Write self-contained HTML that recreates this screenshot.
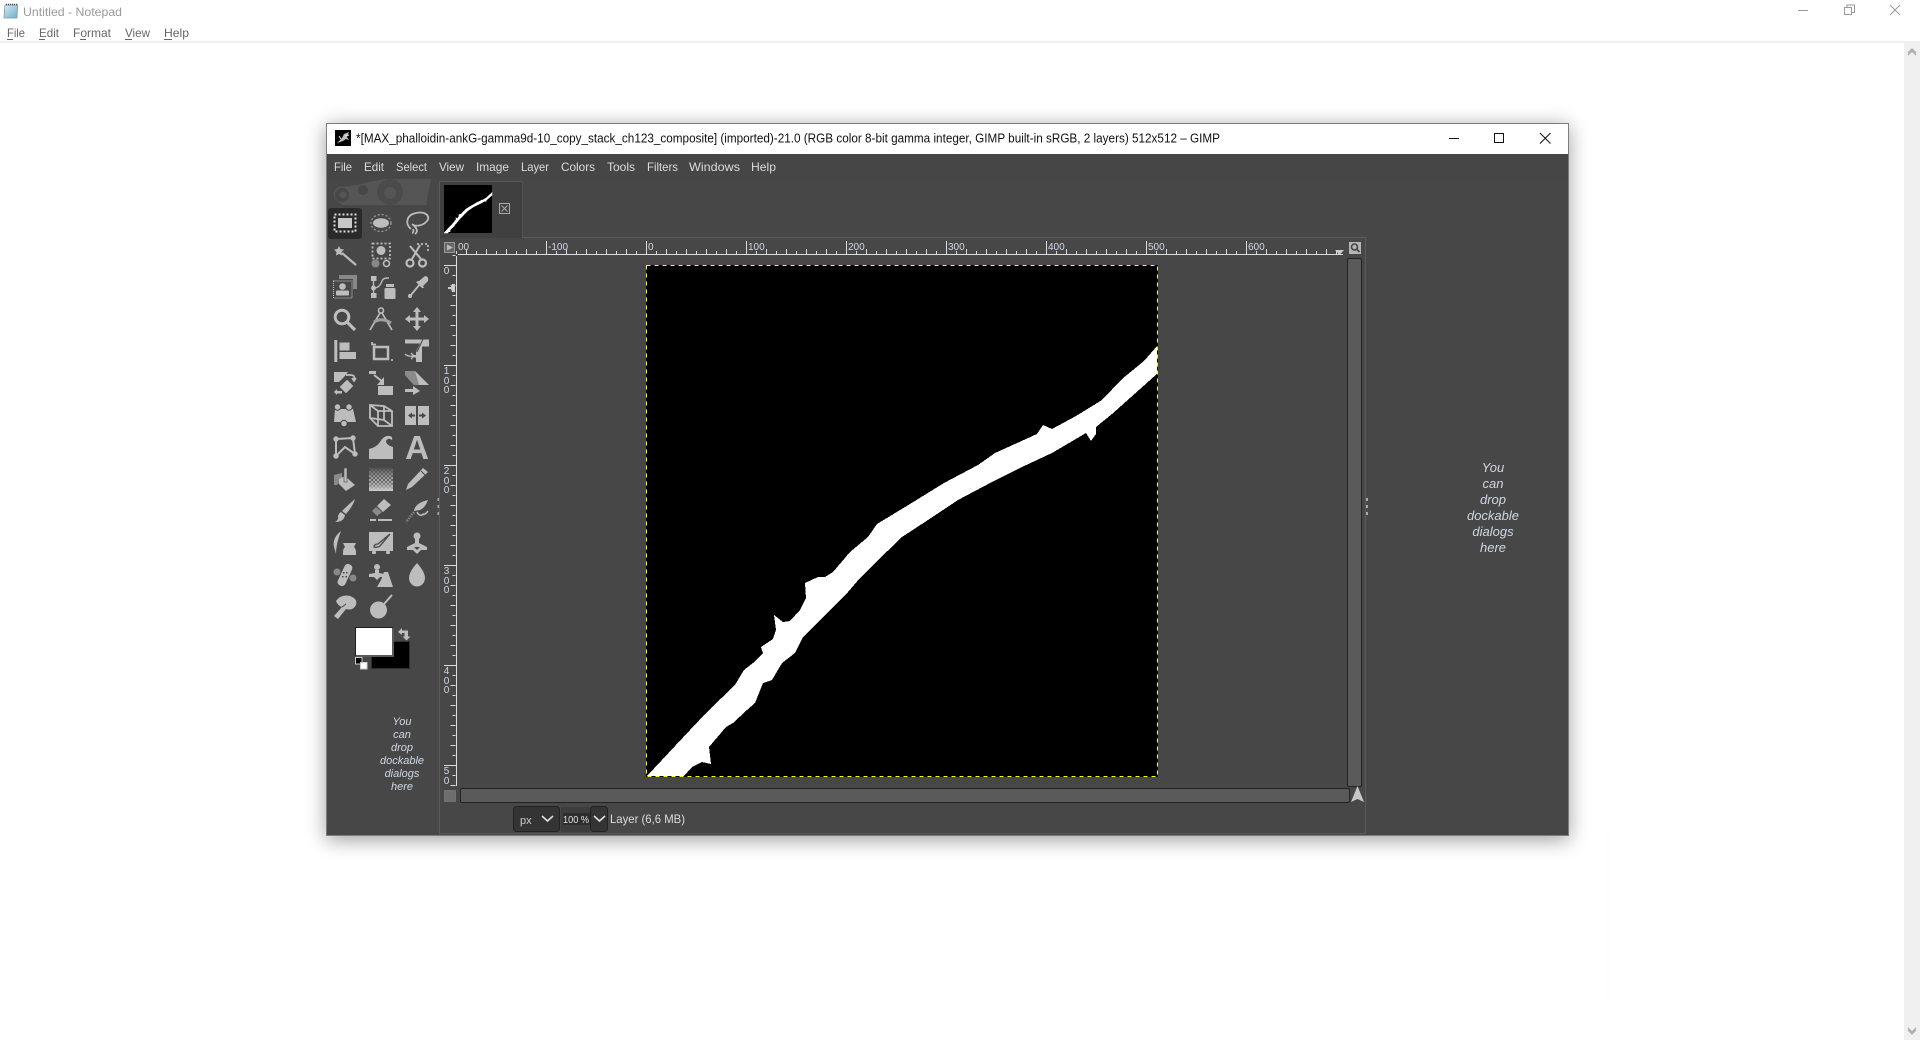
<!DOCTYPE html>
<html><head><meta charset="utf-8"><title>GIMP in Notepad</title>
<style>
html,body{margin:0;padding:0;background:#fff;overflow:hidden}
svg{display:block;font-family:"Liberation Sans",sans-serif}
.n{font-size:12px;fill:#666}
.m{font-size:12px;fill:#dcdcdc}
.r{font-size:10px;fill:#cfd8e6}
.d{font-style:italic;text-anchor:middle;fill:#ced8e4}
.i{fill:#bdbdbd}
.s{fill:none;stroke:#bdbdbd}
</style></head><body>
<svg width="1920" height="1040" viewBox="0 0 1920 1040" xmlns="http://www.w3.org/2000/svg">
<defs>
<filter id="sh" x="-5%" y="-5%" width="110%" height="112%"><feGaussianBlur stdDeviation="10"/></filter>
<pattern id="chk" width="4" height="4" patternUnits="userSpaceOnUse"><rect width="4" height="4" fill="#474747"/><rect width="2" height="2" fill="#bdbdbd"/><rect x="2" y="2" width="2" height="2" fill="#bdbdbd"/></pattern>
<linearGradient id="gf" x1="0" y1="0" x2="0" y2="1"><stop offset="0" stop-color="#474747"/><stop offset=".55" stop-color="#8a8a8a" stop-opacity=".35"/><stop offset="1" stop-color="#d0d0d0"/></linearGradient>
<linearGradient id="np" x1="0" y1="0" x2="1" y2="1"><stop offset="0" stop-color="#d5e8f2"/><stop offset="1" stop-color="#6fb0cc"/></linearGradient>
<polygon id="den" points="647,776 690,730 708,711 735,685 744,670 753,663 763,653 761,647 773,639 776,630 774,615 783,622 790,621 800,610 806,598 805,583 818,577 825,577 833,572 850,552 868,537 877,524 910,504 944,483 978,465 995,453 1037,434 1043,425 1052,429 1076,416 1102,400 1122,379 1144,361 1158,345 1158,373 1112,414 1096,427 1096,434 1091,441 1086,433 1052,453 1022,467 992,482 958,500 928,520 902,537 873,565 860,578 848,592 803,637 795,653 782,663 772,680 763,683 755,703 747,710 733,723 726,727 709,747 711,764 702,762 692,767 683,777 647,777"/>
</defs>

<!-- Notepad -->
<rect width="1920" height="1040" fill="#fff"/>
<g>
<rect x="4" y="5" width="13" height="13" fill="url(#np)" stroke="#7a95a3" stroke-width=".7" transform="skewX(-4) translate(1.2 0)"/>
<line x1="6" y1="4.5" x2="18" y2="4.5" stroke="#444" stroke-width="1.6" stroke-dasharray="1 1"/>
</g>
<text class="n" x="23" y="16" textLength="99" lengthAdjust="spacingAndGlyphs" style="fill:#9a9a9a">Untitled - Notepad</text>
<text class="n" x="7" y="37" textLength="18" lengthAdjust="spacingAndGlyphs">File</text>
<text class="n" x="39" y="37" textLength="20" lengthAdjust="spacingAndGlyphs">Edit</text>
<text class="n" x="73" y="37" textLength="38" lengthAdjust="spacingAndGlyphs">Format</text>
<text class="n" x="125" y="37" textLength="25" lengthAdjust="spacingAndGlyphs">View</text>
<text class="n" x="164" y="37" textLength="25" lengthAdjust="spacingAndGlyphs">Help</text>
<path d="M7 39.5h6M39 39.5h6M80 39.5h6M125 39.5h7M164 39.5h8" stroke="#666" fill="none"/>
<rect x="0" y="41" width="1920" height="2" fill="#f0f0f0"/>
<rect x="1904" y="43" width="16" height="997" fill="#f0f0f0"/>
<path d="M1908 55l4-4 4 4M1908 53l4-4 4 4" fill="none" stroke="#b0b0b0" stroke-width="1.4"/>
<path d="M1908 1028l4 4 4-4M1908 1030l4 4 4-4" fill="none" stroke="#b0b0b0" stroke-width="1.4"/>
<path d="M1798 10.5h10" stroke="#999" fill="none"/>
<path d="M1844.5 7.5h7v7h-7zM1847 7.5v-2.500h7.500v7.500h-3" stroke="#999" fill="none"/>
<path d="M1890 5l10 10M1900 5l-10 10" stroke="#999" fill="none"/>
<line x1="1608" y1="832" x2="1608" y2="1005" stroke="#f9f9f9"/>

<!-- Window shadow -->
<rect x="326" y="126" width="1243" height="714" fill="#000" opacity=".38" filter="url(#sh)"/>

<!-- GIMP window -->
<rect x="326" y="123" width="1243" height="713" fill="#7d7d7d"/>
<rect x="327" y="124" width="1241" height="30" fill="#fff"/>
<rect x="327" y="154" width="1241" height="681" fill="#474747"/>
<rect x="327" y="154" width="1241" height="24" fill="#464646"/>

<!-- title bar -->
<rect x="335" y="130" width="16" height="16" fill="#000"/>
<path d="M337 143l5-5 2-4 5-2-2 5 2 3-3-1-3 2z" fill="#bbb"/>
<path d="M341 139l-2-3M345 136l4-1" stroke="#eee" stroke-width="1"/>
<text x="356" y="142.600" font-size="12.5" fill="#111" textLength="864" lengthAdjust="spacingAndGlyphs">*[MAX_phalloidin-ankG-gamma9d-10_copy_stack_ch123_composite] (imported)-21.0 (RGB color 8-bit gamma integer, GIMP built-in sRGB, 2 layers) 512x512 – GIMP</text>
<path d="M1449 138.500h10" stroke="#111" fill="none"/>
<rect x="1494.500" y="133.500" width="9" height="9" fill="none" stroke="#111"/>
<path d="M1540 133l10.500 10.500M1550.500 133l-10.500 10.500" stroke="#111" fill="none"/>

<!-- menu -->
<text class="m" x="334" y="171" textLength="18" lengthAdjust="spacingAndGlyphs">File</text>
<text class="m" x="364" y="171" textLength="20" lengthAdjust="spacingAndGlyphs">Edit</text>
<text class="m" x="396" y="171" textLength="31" lengthAdjust="spacingAndGlyphs">Select</text>
<text class="m" x="439" y="171" textLength="25" lengthAdjust="spacingAndGlyphs">View</text>
<text class="m" x="476" y="171" textLength="33" lengthAdjust="spacingAndGlyphs">Image</text>
<text class="m" x="521" y="171" textLength="28" lengthAdjust="spacingAndGlyphs">Layer</text>
<text class="m" x="561" y="171" textLength="34" lengthAdjust="spacingAndGlyphs">Colors</text>
<text class="m" x="607" y="171" textLength="28" lengthAdjust="spacingAndGlyphs">Tools</text>
<text class="m" x="647" y="171" textLength="31" lengthAdjust="spacingAndGlyphs">Filters</text>
<text class="m" x="689" y="171" textLength="51" lengthAdjust="spacingAndGlyphs">Windows</text>
<text class="m" x="751" y="171" textLength="25" lengthAdjust="spacingAndGlyphs">Help</text>

<!-- Toolbox logo -->
<path d="M431 179L426 205H342L335 199Q331 192 338 187L350 186Q360 185 368 182L385 179Z" fill="#555"/>
<circle cx="342" cy="195" r="7" fill="#474747"/><circle cx="343" cy="195" r="3.500" fill="#555"/>
<circle cx="363" cy="190" r="5" fill="#474747"/>
<circle cx="390" cy="192" r="13" fill="#4b4b4b"/><circle cx="390" cy="193" r="6" fill="#555"/>

<rect x="328" y="208" width="34" height="31" rx="3" fill="#2a2a2a"/>

<!-- Row 1 -->
<g transform="translate(333 211)"><rect x="1.500" y="3.500" width="21" height="17" fill="none" stroke="#dedede" stroke-width="2" stroke-dasharray="2 2"/><rect x="5" y="7" width="14" height="10" fill="#c8c8c8"/></g>
<g transform="translate(369 211)"><ellipse cx="12" cy="12" rx="8" ry="4.800" class="i"/><ellipse cx="12" cy="12" rx="10" ry="8.500" fill="none" stroke="#999" stroke-width="1.300" stroke-dasharray="2 2"/></g>
<g transform="translate(405 211)"><path class="s" stroke-width="1.800" d="M6 18C0 13 1 4 11 2 20 0 26 5 22 10 18 15 10 16 7 13M7 13C11 16 14 20 10 23M8 18C9 20 8 22 7 22"/></g>
<!-- Row 2 -->
<g transform="translate(333 243)"><path class="i" d="M6 3l1.500 3 3.500.5-2.500 2.500.5 3.500-3-1.500-3 1.500.5-3.500L1 6.500 4.500 6z"/><path class="s" stroke-width="2.200" d="M9 10L23 22"/></g>
<g transform="translate(369 243)"><rect x="3.500" y="0.500" width="17.500" height="15" fill="none" stroke="#bdbdbd" stroke-width="1.800" stroke-dasharray="2 2"/><circle cx="12" cy="7.500" r="4.500" class="i"/><circle cx="6.500" cy="20.500" r="4" fill="#888"/><circle cx="17.500" cy="20.500" r="3" fill="none" stroke="#bdbdbd" stroke-width="1.600"/></g>
<g transform="translate(405 243)"><path class="s" stroke-width="2" d="M7 16L15 2M16 16L5 3"/><circle cx="5" cy="20" r="3.500" fill="none" stroke="#bdbdbd" stroke-width="2.200"/><circle cx="17.500" cy="20" r="3.500" fill="none" stroke="#bdbdbd" stroke-width="2.200"/><path d="M12 1h11v9" fill="none" stroke="#bdbdbd" stroke-width="1.800" stroke-dasharray="2 2"/></g>
<!-- Row 3 -->
<g transform="translate(333 275)"><path fill="#888" d="M6 0h18v14h-4V4H6z"/><rect x="0.500" y="6" width="18.500" height="17" fill="none" stroke="#ccc" stroke-dasharray="1 1"/><circle cx="9.500" cy="11.500" r="3.300" class="i"/><rect x="3" y="15.500" width="13" height="5" rx="1" class="i"/></g>
<g transform="translate(369 275)"><path class="s" stroke-width="1.400" d="M4.500 4V20M4.500 13C9 13 11 11 13 6 14 3.500 16 3 20 3"/><rect x="2" y="1" width="5.500" height="5" class="i"/><rect x="2" y="18" width="5.500" height="5" class="i"/><circle cx="4.500" cy="13" r="2.500" class="i"/><rect x="17" y="9" width="8" height="3" class="i"/><rect x="15.500" y="13" width="11" height="11" rx="1" class="i"/></g>
<g transform="translate(405 275)"><path class="s" stroke-width="1.800" d="M6 20L15 9"/><path class="i" d="M14 6L20 1Q24 1 23 6L18 11 19 13 17 13 11 7 13 6z"/><circle cx="5" cy="21" r="2" class="i"/></g>
<!-- Row 4 -->
<g transform="translate(333 307)"><circle cx="9" cy="10" r="6.800" fill="none" stroke="#bdbdbd" stroke-width="3"/><path class="s" stroke-width="3.200" d="M14 15L22 23"/></g>
<g transform="translate(369 307)"><circle cx="12" cy="3.500" r="2.500" fill="none" stroke="#bdbdbd" stroke-width="1.600"/><path class="s" stroke-width="1.700" d="M11 6L1 23M13 6L23 23"/><path fill="none" stroke="#a0a0a0" stroke-width="3" d="M5 15Q13 10 22 16"/></g>
<g transform="translate(405 307)"><path class="i" d="M12 0l4 5h-2.500v5.500H19V8l5 4-5 4v-2.500h-5.500V19H16l-4 5-4-5h2.500v-5.500H5V16l-5-4 5-4v2.500h5.500V5H8z"/></g>
<!-- Row 5 -->
<g transform="translate(333 339)"><rect x="1.300" y="1" width="3" height="22" class="i"/><rect x="6.500" y="3.500" width="10" height="8" class="i"/><rect x="6.500" y="13" width="16.500" height="7" class="i"/></g>
<g transform="translate(369 339)"><path class="s" stroke-width="2.500" d="M5 8h14v12H5z"/><path class="s" stroke-width="1.700" d="M3 3v2.500h4M23 20v2"/></g>
<g transform="translate(405 339)"><path class="i" d="M0 0.500h24v7h-7v15.500h-6v-4l-2-1v-2l2 0v-3l4-8.500H0z"/><path class="s" stroke-width="1.300" d="M0 15q3 3 8 2M6 14l3 3-3 3"/><path d="M18 0L12 13" stroke="#474747" stroke-width="1"/></g>
<!-- Row 6 -->
<g transform="translate(333 371)"><path class="i" d="M1 1h14l-4 5-5 5H1z"/><path class="i" d="M14 8l7 7-8 8-7-7z" stroke="#474747" stroke-width="1"/><path class="i" d="M1 21l3-3v2h5v2.500H4V24z"/><path class="s" stroke-width="1.700" d="M13 4h5c3 0 4 2 3 5M19 7l2 3 2-3"/></g>
<g transform="translate(369 371)"><rect x="0" y="0" width="7" height="3" class="i"/><path class="s" stroke-width="2" d="M5 4L14 11"/><path class="i" d="M15 6v8H8z"/><rect x="9" y="15" width="15" height="9" class="i"/></g>
<g transform="translate(405 371)"><path class="i" d="M0 0h10l14 14H9L0 4z"/><path fill="#8a8a8a" d="M0 0h10l4 14H9L0 4z"/><path class="i" d="M0 18h8v-3l7 5-7 4v-3H0z"/></g>
<!-- Row 7 -->
<g transform="translate(333 403)"><path class="i" d="M2 6h18l3 13H1z"/><circle cx="4.500" cy="4" r="3.200" class="i" stroke="#474747" stroke-width="1"/><circle cx="16" cy="4" r="3.200" class="i" stroke="#474747" stroke-width="1"/><circle cx="11" cy="20.500" r="3.200" class="i" stroke="#474747" stroke-width="1"/></g>
<g transform="translate(369 403)"><path class="s" stroke-width="1.800" d="M1 2l14 1 8 5v15L9 23 1 15zM15 3v14L1 15M15 17l8 6M9 8h14M9 8v15M1 2l8 6"/></g>
<g transform="translate(405 403)"><rect x="0" y="3" width="11" height="19" class="i"/><rect x="13" y="3" width="11" height="19" class="i"/><path d="M3 12.500l4-3v2h3v2H7v2zM21 12.500l-4-3v2h-3v2h3v2z" fill="#474747"/></g>
<!-- Row 8 -->
<g transform="translate(333 435)"><path class="s" stroke-width="2" d="M3 4L20 3 22 19 12 12 3 21z"/><circle cx="3" cy="4" r="2.700" class="i"/><circle cx="20" cy="3" r="2.700" class="i"/><circle cx="22" cy="19" r="2.700" class="i"/><circle cx="3" cy="21" r="2.700" class="i"/></g>
<g transform="translate(369 435)"><path class="i" d="M0 24V14Q8 12 11 7 15 0 21 1 24 2 23 5 19 2 17 6 17 10 24 12V24z"/></g>
<text x="417" y="459" font-size="33" font-weight="bold" text-anchor="middle" fill="#bdbdbd">A</text>
<!-- Row 9 -->
<g transform="translate(333 467)"><path fill="#8a8a8a" d="M1 8l8-2v7l-5 5H1z"/><path class="i" d="M6 12l6-3 10 9-9 6-7-7z"/><rect x="11" y="1" width="3" height="14" class="i" stroke="#474747" stroke-width=".6"/></g>
<g transform="translate(369 467)"><rect x="0" y="0" width="24" height="24" fill="url(#chk)"/><rect x="0" y="0" width="24" height="24" fill="url(#gf)"/></g>
<g transform="translate(405 467)"><path class="i" d="M18 1l5 4L7 20l-6 3 2-6z"/><path d="M16 4l4 4" stroke="#474747" stroke-width="1"/></g>
<!-- Row 10 -->
<g transform="translate(333 499)"><path class="i" d="M22 0Q20 7 13 15L9 12Q16 5 22 0z"/><path class="i" d="M8 13l4 3Q11 23 2 23 6 21 5 17q1-3 3-4z"/></g>
<g transform="translate(369 499)"><path class="i" d="M15 0l7 6-8 7-6-6z"/><path fill="#8a8a8a" d="M7 8l6 5-5 4-5-5z"/><path class="i" d="M1 20h6v2H1zM9 20h14v2H9z"/></g>
<g transform="translate(405 499)"><path class="i" d="M23 1Q20 9 15 11L9 12Q10 4 23 1z"/><path stroke="#808080" stroke-width="2.500" stroke-dasharray="1.500 1" fill="none" d="M9 13L1 23"/><path class="s" stroke-width="1.500" d="M12 13q2 4 5 3t2-1q1 1 4-3"/></g>
<!-- Row 11 -->
<g transform="translate(333 531)"><path class="i" d="M8 0Q-1 7 1 16q1 3 2 7Q3 13 8 0z"/><path class="i" d="M10 12h13l-2 4q2 2 2 5v3H10v-3q0-3 2-5z"/></g>
<g transform="translate(369 531)"><path class="i" d="M0 1h24v19H0z"/><rect x="3" y="20" width="4" height="3" rx="1" class="i"/><rect x="17" y="20" width="4" height="3" rx="1" class="i"/><path stroke="#474747" stroke-width="1.300" fill="none" d="M21 3L9 13Q5 13 5 16 8 17 11 15z"/></g>
<g transform="translate(405 531)"><circle cx="12" cy="5" r="3.500" class="i"/><path class="i" d="M10 8h4v4l8 4v3H16l-4 4-4-4H2v-3l8-4z"/><path d="M9 16h6l-3 3z" fill="#474747"/></g>
<!-- Row 12 -->
<g transform="translate(333 563)"><circle cx="4" cy="9" r="3.500" fill="#888"/><circle cx="20" cy="15" r="3.500" fill="#888"/><rect x="7.500" y="0" width="9" height="24" rx="4" class="i" stroke="#474747" stroke-width=".8" transform="rotate(25 12 12)"/><path d="M10 9h1.500v1.500H10zM13 9h1.500v1.500H13zM9 13h1.500v1.500H9zM12.500 13H14v1.500h-1.500z" fill="#474747"/></g>
<g transform="translate(369 563)"><circle cx="8" cy="4" r="3" class="i"/><path class="i" d="M6 7h4v3l5 1v3h-4l-3 3-3-3H0v-3l6-1z"/><path class="i" d="M12 17l3-8h4l5 15H8z"/></g>
<g transform="translate(405 563)"><path class="i" d="M12 0Q20 9 20 15a8 8.500 0 0 1-16 0Q4 9 12 0z"/></g>
<!-- Row 13 -->
<g transform="translate(333 595)"><path class="i" d="M3 6Q8-1 17 1 25 4 23 10 20 16 13 14L5 24 1 21 9 12Q5 11 3 6z"/><path d="M9 12l4-3" stroke="#474747" stroke-width="1"/></g>
<g transform="translate(369 595)"><circle cx="9.500" cy="15" r="8.500" class="i"/><path class="s" stroke-width="2" d="M15 9L23 0"/></g>

<!-- FG/BG -->
<path d="M398 632l4-4v2.500h6v6h2.500l-4 4-4-4h2v-3.500h-2.500V635z" fill="#bdbdbd"/>
<rect x="371.500" y="641.500" width="38" height="27" fill="#000" stroke="#2f2f2f" stroke-width="1"/>
<rect x="355.500" y="627.500" width="37" height="28" fill="#fff" stroke="#1d1d1d"/>
<path d="M393 628v28h-37" fill="none" stroke="#5a5a5a" stroke-width="2"/>
<rect x="355.500" y="657.500" width="6.500" height="6.500" fill="#000" stroke="#ccc"/>
<rect x="360.500" y="662.500" width="6.500" height="6.500" fill="#fff" stroke="#ccc"/>

<!-- toolbox drop text -->
<g class="d" font-size="11">
<text class="d" x="402" y="725">You</text><text class="d" x="402" y="738">can</text><text class="d" x="402" y="751">drop</text><text class="d" x="402" y="764">dockable</text><text class="d" x="402" y="777">dialogs</text><text class="d" x="402" y="790">here</text>
</g>

<!-- dividers -->
<path d="M438.500 498v3M438.500 505v3M438.500 512v3" stroke="#a8a8a8" stroke-width="2"/>
<path d="M1367 498v3M1367 505v3M1367 512v3" stroke="#a8a8a8" stroke-width="2"/>

<!-- panel borders -->
<path d="M439.500 835V181.500H522M522 181.500V237.500H1365.500V833.500H440" fill="none" stroke="#5a5a5a"/>
<rect x="440" y="182" width="82" height="56" fill="#404040"/>
<rect x="440" y="238" width="925" height="595" fill="#474747"/>

<!-- thumbnail -->
<rect x="444" y="185" width="48" height="48" fill="#000"/>
<g transform="translate(444 185) scale(.09375) translate(-646 -265)"><use href="#den" fill="#fff" stroke="#fff" stroke-width="6"/></g>
<rect x="499.500" y="203.500" width="10" height="10" fill="none" stroke="#aaa"/>
<path d="M501.500 205.500l6 6M507.500 205.500l-6 6" stroke="#aaa" fill="none"/>

<!-- canvas -->
<rect x="646" y="265" width="512" height="512" fill="#000"/>
<use href="#den" fill="#fff" shape-rendering="crispEdges"/>
<rect x="646.500" y="265.500" width="511" height="511" fill="none" stroke="#000"/>
<rect x="646.500" y="265.500" width="511" height="511" fill="none" stroke="#ff0" stroke-dasharray="4 4"/>

<!-- rulers -->
<rect x="444.500" y="242.500" width="10" height="10" fill="#666" stroke="#999"/>
<path d="M447 244.500l6 3-6 3z" fill="#bbb"/>
<path d="M458 254.500H1343" stroke="#dcdcdc" fill="none"/>
<line x1="456" y1="252.500" x2="1343" y2="252.500" stroke="#dcdcdc" stroke-width="3" stroke-dasharray="1 9"/>
<line x1="466" y1="251.500" x2="1343" y2="251.500" stroke="#dcdcdc" stroke-width="5" stroke-dasharray="1 19"/>
<path d="M546.500 241v13M646.500 241v13M746.500 241v13M846.500 241v13M946.500 241v13M1046.500 241v13M1146.500 241v13M1246.500 241v13" stroke="#dcdcdc" fill="none"/>
<text class="r" x="458" y="250">00</text>
<text class="r" x="548" y="250">-100</text>
<text class="r" x="648" y="250">0</text>
<text class="r" x="748" y="250">100</text>
<text class="r" x="848" y="250">200</text>
<text class="r" x="948" y="250">300</text>
<text class="r" x="1048" y="250">400</text>
<text class="r" x="1148" y="250">500</text>
<text class="r" x="1248" y="250">600</text>
<path d="M1335 250h9l-4.500 5z" fill="#ccc"/>

<path d="M456.500 256V786" stroke="#dcdcdc" fill="none"/>
<line x1="454" y1="255" x2="454" y2="786" stroke="#dcdcdc" stroke-width="3" stroke-dasharray="1 9"/>
<line x1="453" y1="265" x2="453" y2="786" stroke="#dcdcdc" stroke-width="5" stroke-dasharray="1 19"/>
<path d="M444 265.500h12M444 365.500h12M444 465.500h12M444 565.500h12M444 665.500h12M444 765.500h12" stroke="#dcdcdc" fill="none"/>
<path d="M452 284h3v8h-3l-1-3h-3v-2h3z" fill="#ccc"/>
<g class="r" text-anchor="middle">
<text class="r" x="446.500" y="274" text-anchor="middle">0</text>
<text class="r" x="446.500" y="374" text-anchor="middle">1</text><text class="r" x="446.500" y="384" text-anchor="middle">0</text><text class="r" x="446.500" y="393" text-anchor="middle">0</text>
<text class="r" x="446.500" y="474" text-anchor="middle">2</text><text class="r" x="446.500" y="484" text-anchor="middle">0</text><text class="r" x="446.500" y="493" text-anchor="middle">0</text>
<text class="r" x="446.500" y="574" text-anchor="middle">3</text><text class="r" x="446.500" y="584" text-anchor="middle">0</text><text class="r" x="446.500" y="593" text-anchor="middle">0</text>
<text class="r" x="446.500" y="674" text-anchor="middle">4</text><text class="r" x="446.500" y="684" text-anchor="middle">0</text><text class="r" x="446.500" y="693" text-anchor="middle">0</text>
<text class="r" x="446.500" y="774" text-anchor="middle">5</text><text class="r" x="446.500" y="784" text-anchor="middle">0</text>
</g>

<!-- scrollbars -->
<rect x="1349" y="242" width="12" height="12" fill="#b5b5b5"/>
<circle cx="1354.500" cy="247" r="3" fill="none" stroke="#444" stroke-width="1.600"/><path d="M1357 249.500l2.500 2.500" stroke="#444" stroke-width="1.600"/>
<rect x="1347.500" y="258.500" width="14" height="528" rx="1.500" fill="#5a5a5a" stroke="#222"/>
<rect x="460.500" y="788.500" width="889" height="14" rx="1.500" fill="#5a5a5a" stroke="#222"/>
<rect x="444.500" y="790.500" width="11" height="11" fill="#6e6e6e" stroke="#8a8a8a" stroke-dasharray="1 1"/>
<path d="M1351 802l6.500-16 6.500 16-6.500-3z" fill="#c8c8c8"/>

<!-- status bar -->
<rect x="513.500" y="806.500" width="46" height="25" rx="3" fill="#343434" stroke="#222"/>
<text x="520" y="824" font-size="11" fill="#cfcfcf">px</text>
<path d="M542 816l5.500 5 5.500-5" fill="none" stroke="#e0e0e0" stroke-width="1.600"/>
<rect x="561" y="807" width="29" height="25" fill="#3d3d3d"/>
<rect x="563" y="813" width="27" height="12" fill="#2e2e2e"/>
<text x="563" y="823" font-size="10" fill="#dde3ea" textLength="26" lengthAdjust="spacingAndGlyphs">100 %</text>
<rect x="590.500" y="806.500" width="17" height="25" rx="3" fill="#343434" stroke="#222"/>
<path d="M594 816l5.500 5 5.500-5" fill="none" stroke="#e0e0e0" stroke-width="1.600"/>
<text class="m" x="610" y="823" textLength="75" lengthAdjust="spacingAndGlyphs">Layer (6,6 MB)</text>

<!-- right dock drop text -->
<text class="d" font-size="13" x="1493" y="472">You</text>
<text class="d" font-size="13" x="1493" y="488">can</text>
<text class="d" font-size="13" x="1493" y="504">drop</text>
<text class="d" font-size="13" x="1493" y="520">dockable</text>
<text class="d" font-size="13" x="1493" y="536">dialogs</text>
<text class="d" font-size="13" x="1493" y="552">here</text>
</svg>
</body></html>
